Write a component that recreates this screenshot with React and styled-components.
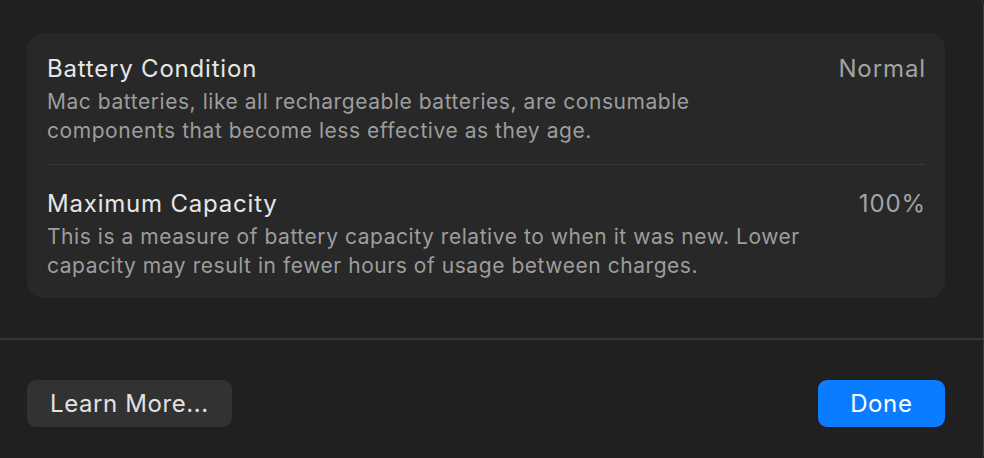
import React from "react";
import styled, { createGlobalStyle } from "styled-components";

const GlobalStyle = createGlobalStyle`
  html, body {
    margin: 0;
    padding: 0;
    background: #161616;
    overflow: hidden;
  }
  body {
    font-family: Inter, "Noto Sans", "Liberation Sans", sans-serif;
    -webkit-font-smoothing: antialiased;
  }
`;

// the sheet is cropped: only its right edge and corners show
const Sheet = styled.div`
  box-sizing: border-box;
  width: 984px;
  height: 500px;
  margin-top: -20px;
  padding-top: 20px;
  background: #202020;
  border-right: 1px solid #3e3e3e;
  border-top: 1px solid #3e3e3e;
  border-bottom: 1px solid #3e3e3e;
  border-radius: 0 28px 28px 0;
`;

const Content = styled.div`
  padding: 32px 38px 0 27px;
`;

const Card = styled.div`
  background: #282828;
  border-radius: 16px;
  padding: 0 20px;
`;

const Row = styled.div`
  display: flex;
  justify-content: space-between;
  align-items: flex-start;
  padding: ${(p) => (p.$first ? "22px 0 19px" : "25px 0 18px")};
  border-top: ${(p) => (p.$first ? "none" : "1px solid #383838")};
`;

const Text = styled.div`
  display: flex;
  flex-direction: column;
  gap: 4px;
`;

const Title = styled.div`
  color: #e6e6e6;
  font-size: 24px;
  line-height: 28px;
  letter-spacing: 0.8px;
`;

const Desc = styled.div`
  color: #9d9d9d;
  font-size: 21px;
  line-height: 29px;
  letter-spacing: 0.55px;
`;

const Value = styled.div`
  color: #a3a3a3;
  font-size: 24px;
  line-height: 28px;
  letter-spacing: 0.9px;
  margin-right: -1px;
`;

const Separator = styled.div`
  margin-top: 40px;
  height: 2px;
  background: #363636;
`;

const Footer = styled.div`
  display: flex;
  justify-content: space-between;
  padding: 40px 38px 0 27px;
`;

const Button = styled.button`
  height: 47px;
  padding: 0 ${(p) => (p.$primary ? "32.5px" : "23px")};
  border: none;
  border-radius: 9px;
  background: ${(p) => (p.$primary ? "#0b7cff" : "#323232")};
  color: ${(p) => (p.$primary ? "#ffffff" : "#e2e2e2")};
  font-family: inherit;
  font-size: 24px;
  letter-spacing: 0.6px;
  cursor: pointer;
`;

const rows = [
  {
    title: "Battery Condition",
    value: "Normal",
    desc: [
      "Mac batteries, like all rechargeable batteries, are consumable",
      "components that become less effective as they age.",
    ],
  },
  {
    title: "Maximum Capacity",
    value: "100%",
    desc: [
      "This is a measure of battery capacity relative to when it was new. Lower",
      "capacity may result in fewer hours of usage between charges.",
    ],
  },
];

export default function App() {
  return (
    <>
      <GlobalStyle />
      <Sheet>
        <Content>
          <Card>
            {rows.map((r, i) => (
              <Row key={r.title} $first={i === 0}>
                <Text>
                  <Title>{r.title}</Title>
                  <Desc>
                    {r.desc.map((line) => (
                      <div key={line}>{line}</div>
                    ))}
                  </Desc>
                </Text>
                <Value>{r.value}</Value>
              </Row>
            ))}
          </Card>
        </Content>
        <Separator />
        <Footer>
          <Button>Learn More...</Button>
          <Button $primary>Done</Button>
        </Footer>
      </Sheet>
    </>
  );
}
